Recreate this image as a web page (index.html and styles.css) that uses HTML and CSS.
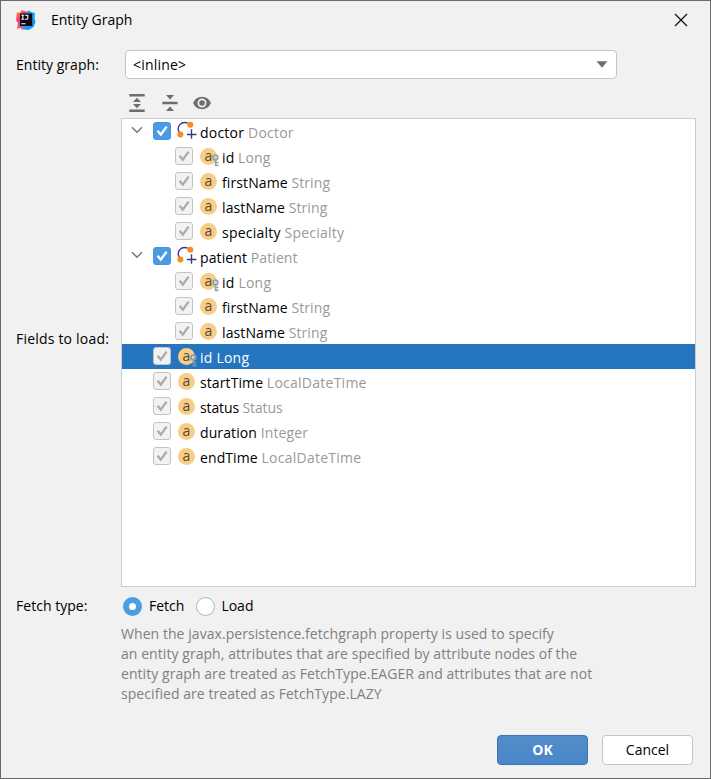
FILE: index.html
```html
<!DOCTYPE html>
<html lang="en">
<head>
<meta charset="utf-8">
<title>Entity Graph</title>
<link rel="stylesheet" href="styles.css">
</head>
<body>
<svg class="defs" width="0" height="0" aria-hidden="true">
  <defs>
    <linearGradient id="warm" x1="0" y1="0" x2="0.6" y2="1"><stop offset="0" stop-color="#ff9a3c"/><stop offset="0.5" stop-color="#fe2f6a"/><stop offset="1" stop-color="#ff8a2a"/></linearGradient>
    <linearGradient id="cool" x1="0" y1="0" x2="1" y2="1"><stop offset="0" stop-color="#4a7df0"/><stop offset="0.5" stop-color="#14a5f5"/><stop offset="1" stop-color="#1689ee"/></linearGradient>
    <symbol id="chevron" viewBox="0 0 12 8"><path d="M1 1.2 6 6.2 11 1.2" fill="none" stroke="#777" stroke-width="1.5"/></symbol>
    <symbol id="tick" viewBox="0 0 18 18"><path d="M4.6 8.8 7.8 12.7 13.6 4.6" fill="none" stroke="currentColor" stroke-width="2.3"/></symbol>
    <symbol id="key" viewBox="0 0 8 13"><circle cx="3.4" cy="3.4" r="2.4" fill="none" stroke="currentColor" stroke-width="1.7"/><path d="M3.6 6v6.3M3.6 8.5h2.8M3.6 11.4h2.8" fill="none" stroke="currentColor" stroke-width="1.6"/></symbol>
    <symbol id="relation" viewBox="0 0 20 20"><path d="M2.2 12C-.8 6.5 4 .8 10.6 3M14.5 9.2v9.6M10 14.5h9.4" fill="none" stroke="#41348c" stroke-width="1.4"/><circle cx="13.3" cy="4.8" r="3" fill="#f98b1d"/><circle cx="3.4" cy="14.6" r="3" fill="#f98b1d"/></symbol>
  </defs>
</svg>
<main class="dialog">
  <header class="titlebar">
    <svg class="logo" width="20" height="20" viewBox="0 0 20 20">
      <path d="M1 2 3.5 3 6 0l5 2v14l-4 4-3-2-3 1 1-6-2-3z" fill="url(#warm)"/>
      <path d="M10 2l3-1.5 2 1.5 4 1-.5 5 1 4-2 5-5 3-5-.5-2-3 4-5z" fill="url(#cool)"/>
      <path d="M2 12l4-2 3 7-4 1z" fill="#a65bea"/>
      <rect x="4" y="3.5" width="12.2" height="12.5" fill="#100b12"/>
      <path d="M5.3 5.3h3M6.8 5.3v4M5.3 9.3h3M9.3 5.3h2.5v3q0 1-1.2 1H9M5.3 13.8h4.2" fill="none" stroke="#fff" stroke-width="1.1"/>
    </svg>
    <h1 class="title">Entity Graph</h1>
    <svg class="close" width="14" height="14" viewBox="0 0 14 14"><path d="M1 1l12 12M13 1 1 13" stroke="#111" stroke-width="1.3"/></svg>
  </header>

  <div class="graph-row">
    <span class="label">Entity graph:</span>
    <div class="combo"><span>&lt;inline&gt;</span><svg width="12" height="7" viewBox="0 0 12 7"><path d="M.5.3h11L6 6.8z" fill="#6e6e6e"/></svg></div>
  </div>

  <div class="toolbar">
    <svg width="16" height="18" viewBox="0 0 16 18"><path d="M.3 0h15.4v2.5H.3zM.3 15.5h15.4V18H.3zM8 3.8 12 8H4zM8 14.2 12 10H4z" fill="#6e6e6e"/></svg>
    <svg width="16" height="18" viewBox="0 0 16 18"><path d="M.3 7.8h15.4v2.5H.3zM4 1h8L8 5.6zM4 17h8l-4-4.6z" fill="#6e6e6e"/></svg>
    <svg width="18" height="14" viewBox="0 0 18 14"><path fill-rule="evenodd" d="M0 7Q3 .8 9 .8T18 7Q15 13.2 9 13.2T0 7zM9 2.5a4.5 4.5 0 1 0 0 9a4.5 4.5 0 1 0 0-9z" fill="#6e6e6e"/><circle cx="9" cy="7" r="2.8" fill="#6e6e6e"/></svg>
  </div>

  <div class="fields">
    <span class="label fields-label">Fields to load:</span>
    <div class="tree">
      <div class="row"><svg class="chev"><use href="#chevron"/></svg><span class="check on"><svg><use href="#tick"/></svg></span><svg class="rel"><use href="#relation"/></svg><span class="name parent">doctor <i>Doctor</i></span></div>
      <div class="row child"><span class="check"><svg><use href="#tick"/></svg></span><span class="attr">a<svg class="key"><use href="#key"/></svg></span><span class="name">id <i>Long</i></span></div>
      <div class="row child"><span class="check"><svg><use href="#tick"/></svg></span><span class="attr">a</span><span class="name">firstName <i>String</i></span></div>
      <div class="row child"><span class="check"><svg><use href="#tick"/></svg></span><span class="attr">a</span><span class="name">lastName <i>String</i></span></div>
      <div class="row child"><span class="check"><svg><use href="#tick"/></svg></span><span class="attr">a</span><span class="name parent">specialty <i>Specialty</i></span></div>
      <div class="row"><svg class="chev"><use href="#chevron"/></svg><span class="check on"><svg><use href="#tick"/></svg></span><svg class="rel"><use href="#relation"/></svg><span class="name">patient <i>Patient</i></span></div>
      <div class="row child"><span class="check"><svg><use href="#tick"/></svg></span><span class="attr">a<svg class="key"><use href="#key"/></svg></span><span class="name parent">id <i>Long</i></span></div>
      <div class="row child"><span class="check"><svg><use href="#tick"/></svg></span><span class="attr">a</span><span class="name">firstName <i>String</i></span></div>
      <div class="row child"><span class="check"><svg><use href="#tick"/></svg></span><span class="attr">a</span><span class="name">lastName <i>String</i></span></div>
      <div class="row leaf selected"><span class="check"><svg><use href="#tick"/></svg></span><span class="attr">a<svg class="key"><use href="#key"/></svg></span><span class="name parent">id <i>Long</i></span></div>
      <div class="row leaf"><span class="check"><svg><use href="#tick"/></svg></span><span class="attr">a</span><span class="name">startTime <i class="wide">LocalDateTime</i></span></div>
      <div class="row leaf"><span class="check"><svg><use href="#tick"/></svg></span><span class="attr">a</span><span class="name narrow">status <i>Status</i></span></div>
      <div class="row leaf"><span class="check"><svg><use href="#tick"/></svg></span><span class="attr">a</span><span class="name">duration <i>Integer</i></span></div>
      <div class="row leaf"><span class="check"><svg><use href="#tick"/></svg></span><span class="attr">a</span><span class="name">endTime <i class="wide">LocalDateTime</i></span></div>
    </div>
  </div>

  <div class="fetch-row">
    <span class="label">Fetch type:</span>
    <span class="radio checked"></span><span class="option fetch">Fetch</span>
    <span class="radio"></span><span class="option">Load</span>
  </div>
  <p class="hint">When the javax.persistence.fetchgraph property is used to specify<br>an entity graph, attributes that are specified by attribute nodes of the<br>entity graph are treated as FetchType.EAGER and attributes that are not<br>specified are treated as FetchType.LAZY</p>

  <footer class="buttons">
    <button class="button primary">OK</button>
    <button class="button">Cancel</button>
  </footer>
</main>
</body>
</html>
```
FILE: styles.css
```css
* { box-sizing: border-box; }
body { margin: 0; font: 14px/20px "Open Sans", "Noto Sans", sans-serif; color: #000; }
.defs { display: block; position: absolute; }
.dialog { width: 711px; height: 779px; background: #f1f1f1; border: 1px solid #6c6a6c; overflow: hidden; }
.titlebar { display: flex; align-items: center; height: 38px; padding: 0 14px 0 15px; }
.logo { flex: none; margin-top: -1px; }
.title { margin: 0 auto 0 15px; font-size: 14px; font-weight: 400; }
.close { margin: -1px 8px 0 0; }
.label { flex: none; width: 105px; letter-spacing: 0.03px; }
.graph-row { display: flex; align-items: center; height: 29px; margin: 11px 0 0 15px; }
.combo { display: flex; align-items: center; justify-content: space-between; width: 492px; height: 29px; margin-left: 4px; padding: 0 8px 0 7px; background: #fff; border: 1px solid #c4c4c4; border-radius: 4px; letter-spacing: 0.2px; }
.toolbar { display: flex; align-items: center; gap: 17px; height: 18px; margin: 15px 0 0 128px; }
.toolbar svg:last-child { margin-left: -2px; }
.fields { display: flex; margin: 6px 0 0 15px; }
.fields-label { margin-top: 211px; letter-spacing: 0.2px; }
.tree { width: 575px; height: 469px; background: #fff; border: 1px solid #cdcdcd; }
.row { display: flex; align-items: center; height: 25px; padding-left: 9px; }
.row.leaf { padding-left: 31px; }
.row.child { padding-left: 53px; }
.row.selected { background: #2675bf; color: #fff; }
.chev { flex: none; width: 12px; height: 8px; margin: -3px 10px 0 0; }
.check { flex: none; width: 18px; height: 18px; margin: -1px 7px 0 0; border: 1px solid #c3c3c3; border-radius: 3px; background: #f2f2f2; color: #aaa; }
.row:not(.child):not(.leaf) .check { margin-right: 6px; }
.check.on { border-color: #4595dd; background: #4a9be3; color: #fff; }
.check svg { display: block; width: 18px; height: 18px; margin: -1px; }
.rel { flex: none; width: 20px; height: 20px; margin: -3px 3px 0 0; }
.attr { position: relative; flex: none; width: 17px; height: 17px; margin: -1px 5px 0 0; border-radius: 50%; background: #f7cd87; color: #594a34; font-size: 14px; line-height: 15px; text-align: center; }
.key { position: absolute; left: 12px; top: 6px; width: 8px; height: 13px; color: #91a3b0; }
.selected .key { color: #729cc4; }
.name { margin-top: 2px; white-space: pre; letter-spacing: 0.1px; }
.name.parent { letter-spacing: 0.22px; }
.name i { font-style: normal; color: #999; }
.name i.wide { letter-spacing: 0.25px; }
.name.narrow { letter-spacing: -0.12px; }
.selected .name i { color: #fff; }
.fetch-row { display: flex; align-items: center; height: 20px; margin: 9px 0 0 15px; }
.radio { width: 19px; height: 19px; margin-left: 2px; border: 1px solid #b5b5b5; border-radius: 50%; background: #fff; }
.radio.checked { border: 6px solid #4d9de3; }
.option { margin-left: 7px; }
.option:last-child { margin-left: 6px; }
.fetch { margin-right: 10px; }
.hint { margin: 8px 0 0 120px; color: #808080; white-space: nowrap; letter-spacing: 0.06px; }
.buttons { display: flex; justify-content: flex-end; gap: 14px; margin: 31px 17px 0 0; }
.button { width: 91px; height: 30px; padding: 0; border: 1px solid #c4c4c4; border-radius: 4px; background: #fff; font: inherit; color: #000; }
.button.primary { border-color: #3d75b2; background: linear-gradient(#528cca, #4987c8); color: #fff; font-weight: 700; }
```
